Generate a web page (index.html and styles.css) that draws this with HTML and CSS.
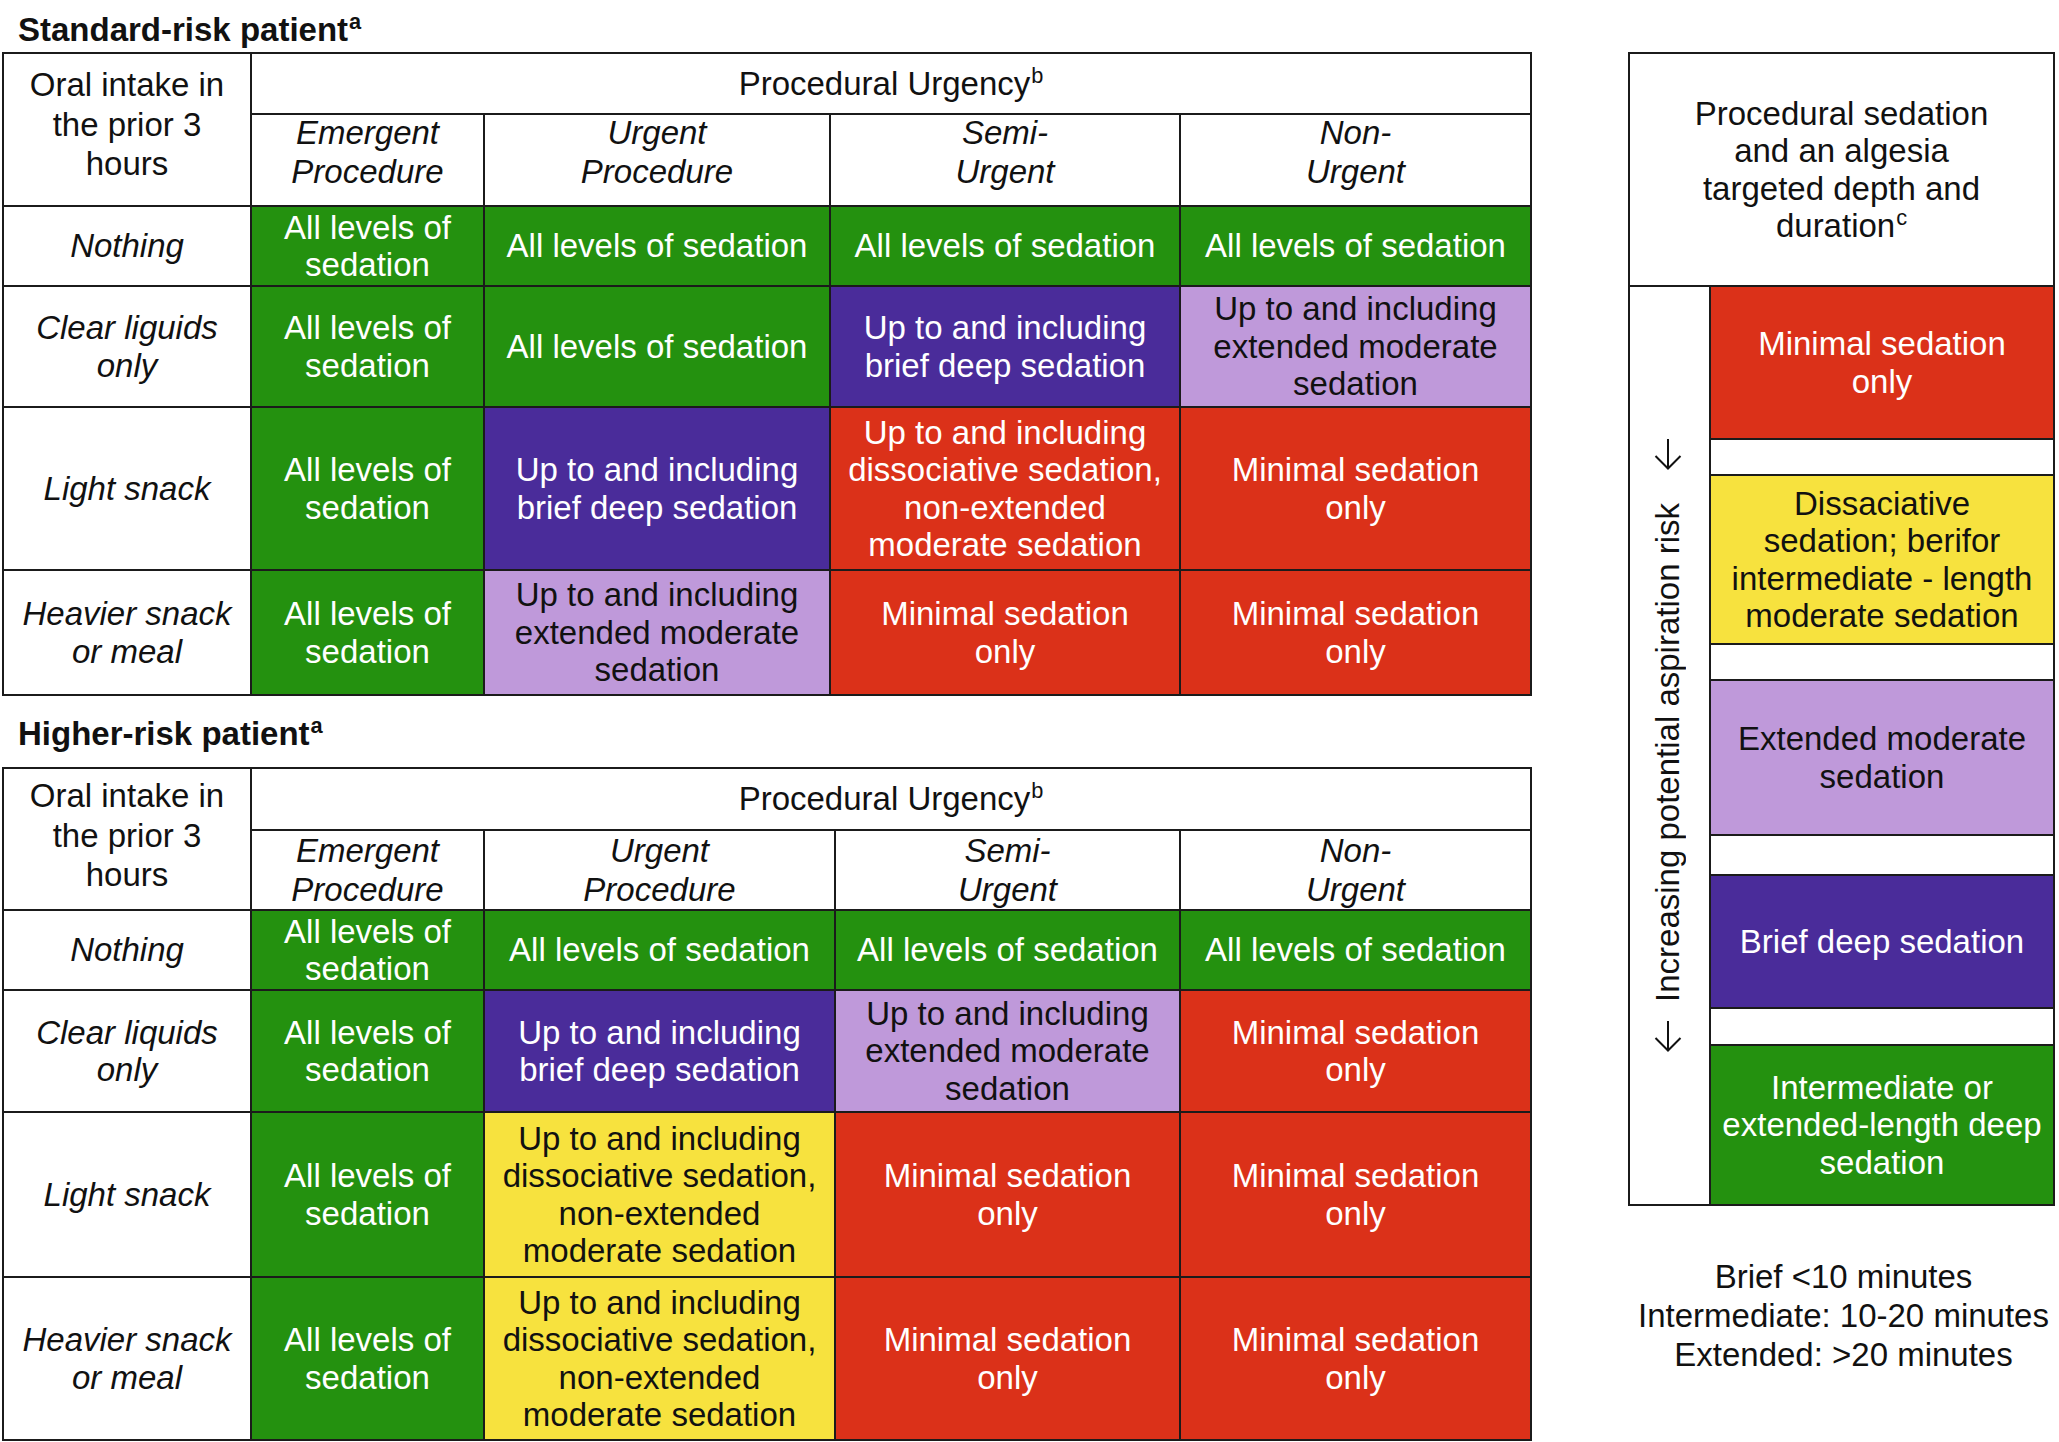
FILE: index.html
```html
<!DOCTYPE html>
<html lang="en">
<head>
<meta charset="utf-8">
<title>Procedural sedation by oral intake and urgency</title>
<link rel="stylesheet" href="styles.css">
</head>
<body>
<div class="page">
  <div class="left">
    <h2 class="title t1">Standard-risk patient<span class="sup">a</span></h2>
    <div class="grid g1">
      <div class="c hd oral">Oral intake in<br>the prior 3<br>hours</div>
      <div class="c hd urg"><span class="tx">Procedural Urgency<span class="sup">b</span></span></div>
      <div class="c hd it sub">Emergent<br>Procedure</div>
      <div class="c hd it sub">Urgent<br>Procedure</div>
      <div class="c hd it sub">Semi-<br>Urgent</div>
      <div class="c hd it sub">Non-<br>Urgent</div>

      <div class="c it">Nothing</div>
      <div class="c green">All levels of<br>sedation</div>
      <div class="c green">All levels of sedation</div>
      <div class="c green">All levels of sedation</div>
      <div class="c green">All levels of sedation</div>

      <div class="c it">Clear liguids<br>only</div>
      <div class="c green">All levels of<br>sedation</div>
      <div class="c green">All levels of sedation</div>
      <div class="c purple">Up to and including<br>brief deep sedation</div>
      <div class="c lav">Up to and including<br>extended moderate<br>sedation</div>

      <div class="c it">Light snack</div>
      <div class="c green">All levels of<br>sedation</div>
      <div class="c purple">Up to and including<br>brief deep sedation</div>
      <div class="c red">Up to and including<br>dissociative sedation,<br>non-extended<br>moderate sedation</div>
      <div class="c red">Minimal sedation<br>only</div>

      <div class="c it">Heavier snack<br>or meal</div>
      <div class="c green">All levels of<br>sedation</div>
      <div class="c lav">Up to and including<br>extended moderate<br>sedation</div>
      <div class="c red">Minimal sedation<br>only</div>
      <div class="c red">Minimal sedation<br>only</div>
    </div>

    <h2 class="title t2">Higher-risk patient<span class="sup">a</span></h2>
    <div class="grid g2">
      <div class="c hd oral">Oral intake in<br>the prior 3<br>hours</div>
      <div class="c hd urg"><span class="tx">Procedural Urgency<span class="sup">b</span></span></div>
      <div class="c hd it sub">Emergent<br>Procedure</div>
      <div class="c hd it sub">Urgent<br>Procedure</div>
      <div class="c hd it sub">Semi-<br>Urgent</div>
      <div class="c hd it sub">Non-<br>Urgent</div>

      <div class="c it">Nothing</div>
      <div class="c green">All levels of<br>sedation</div>
      <div class="c green">All levels of sedation</div>
      <div class="c green">All levels of sedation</div>
      <div class="c green">All levels of sedation</div>

      <div class="c it">Clear liquids<br>only</div>
      <div class="c green">All levels of<br>sedation</div>
      <div class="c purple">Up to and including<br>brief deep sedation</div>
      <div class="c lav">Up to and including<br>extended moderate<br>sedation</div>
      <div class="c red">Minimal sedation<br>only</div>

      <div class="c it">Light snack</div>
      <div class="c green">All levels of<br>sedation</div>
      <div class="c yellow">Up to and including<br>dissociative sedation,<br>non-extended<br>moderate sedation</div>
      <div class="c red">Minimal sedation<br>only</div>
      <div class="c red">Minimal sedation<br>only</div>

      <div class="c it">Heavier snack<br>or meal</div>
      <div class="c green">All levels of<br>sedation</div>
      <div class="c yellow">Up to and including<br>dissociative sedation,<br>non-extended<br>moderate sedation</div>
      <div class="c red">Minimal sedation<br>only</div>
      <div class="c red">Minimal sedation<br>only</div>
    </div>
  </div>

  <div class="right">
    <div class="panel">
      <div class="phead"><span class="tx">Procedural sedation<br>and an algesia<br>targeted depth and<br>duration<span class="sup">c</span></span></div>
      <div class="pbody">
        <div class="strip">
          <svg class="arr" viewBox="0 0 28 31" width="28" height="31" aria-hidden="true"><path d="M14 0 V29.5 M1.5 17 L14 29.5 L26.5 17" fill="none" stroke="#111" stroke-width="2"/></svg>
          <span class="vt">Increasing potential aspiration risk</span>
          <svg class="arr" viewBox="0 0 28 31" width="28" height="31" aria-hidden="true"><path d="M14 0 V29.5 M1.5 17 L14 29.5 L26.5 17" fill="none" stroke="#111" stroke-width="2"/></svg>
        </div>
        <div class="levels">
          <div class="lv red">Minimal sedation<br>only</div>
          <div class="lv"></div>
          <div class="lv yellow">Dissaciative<br>sedation; berifor<br>intermediate - length<br>moderate sedation</div>
          <div class="lv"></div>
          <div class="lv lav">Extended moderate<br>sedation</div>
          <div class="lv"></div>
          <div class="lv purple">Brief deep sedation</div>
          <div class="lv"></div>
          <div class="lv green">Intermediate or<br>extended-length deep<br>sedation</div>
        </div>
      </div>
    </div>
    <div class="foot">Brief &lt;10 minutes<br>Intermediate: 10-20 minutes<br>Extended: &gt;20 minutes</div>
  </div>
</div>
</body>
</html>
```

FILE: styles.css
```css
html, body {
  margin: 0;
  padding: 0;
  background: #ffffff;
}

body {
  font-family: "Liberation Sans", Arial, Helvetica, sans-serif;
  color: #111111;
}

.page {
  display: flex;
  align-items: flex-start;
  width: 2059px;
  height: 1442px;
  overflow: hidden;
}

.left {
  width: 1532px;
  padding-left: 2px;
  box-sizing: border-box;
  flex-shrink: 0;
}

.title {
  margin: 0;
  box-sizing: border-box;
  padding-left: 16px;
  font-size: 33px;
  font-weight: 700;
  line-height: 40px;
  color: #111111;
}

.t1 {
  height: 52px;
  padding-top: 10px;
}

.t2 {
  height: 71px;
  padding-top: 18px;
}

.tx {
  display: block;
}

.sup {
  font-size: 0.66em;
  vertical-align: 0.55em;
  line-height: 0;
  margin-left: 1px;
}

.grid {
  display: grid;
  width: 1530px;
  box-sizing: border-box;
  border-left: 2px solid #1b1b1b;
  border-top: 2px solid #1b1b1b;
}

.g1 {
  grid-template-columns: 248px 233px 346px 350px 351px;
  grid-template-rows: 61px 92px 80px 121px 163px 125px;
}

.g2 {
  grid-template-columns: 248px 233px 351px 345px 351px;
  grid-template-rows: 62px 80px 80px 122px 165px 163px;
}

.c {
  box-sizing: border-box;
  border-right: 2px solid #1b1b1b;
  border-bottom: 2px solid #1b1b1b;
  display: flex;
  align-items: center;
  justify-content: center;
  text-align: center;
  font-size: 33px;
  line-height: 37.4px;
  white-space: nowrap;
  background: #ffffff;
  color: #111111;
}

.hd {
  line-height: 39.5px;
}

.it {
  font-style: italic;
}

.oral {
  grid-row: span 2;
}

.g1 .oral {
  padding-bottom: 10px;
}

.g2 .oral {
  padding-bottom: 7px;
}

.urg {
  grid-column: span 4;
}

.g1 .sub {
  padding-bottom: 16px;
}

.green {
  background: #24910f;
  color: #ffffff;
}

.purple {
  background: #4a2c9a;
  color: #ffffff;
}

.lav {
  background: #bf99da;
  color: #111111;
}

.red {
  background: #db3119;
  color: #ffffff;
}

.yellow {
  background: #f7e23e;
  color: #111111;
}

.right {
  width: 431px;
  margin-left: 96px;
  flex-shrink: 0;
}

.panel {
  width: 427px;
  margin-top: 52px;
  box-sizing: border-box;
  border: 2px solid #1b1b1b;
  font-size: 33px;
}

.phead {
  height: 233px;
  box-sizing: border-box;
  border-bottom: 2px solid #1b1b1b;
  display: flex;
  align-items: center;
  justify-content: center;
  text-align: center;
  line-height: 37.5px;
  white-space: nowrap;
}

.pbody {
  display: grid;
  grid-template-columns: 81px 342px;
}

.strip {
  box-sizing: border-box;
  border-right: 2px solid #1b1b1b;
  display: flex;
  flex-direction: column;
  align-items: center;
  justify-content: center;
  overflow: hidden;
}

.arr {
  display: block;
  flex-shrink: 0;
  margin-right: 3px;
}

.vt {
  display: block;
  writing-mode: vertical-rl;
  transform: rotate(180deg);
  white-space: nowrap;
  font-size: 33px;
  line-height: 36px;
  margin: 33px 3px 19px 0;
}

.levels {
  display: grid;
  grid-template-rows: 153px 36px 169px 36px 155px 40px 133px 37px 158px;
}

.lv {
  box-sizing: border-box;
  border-bottom: 2px solid #1b1b1b;
  display: flex;
  align-items: center;
  justify-content: center;
  text-align: center;
  line-height: 37.5px;
  white-space: nowrap;
  background: #ffffff;
}

.lv:last-child {
  border-bottom: 0;
}

.levels .red,
.levels .purple,
.levels .green {
  color: #ffffff;
}

.levels .red { background: #db3119; }
.levels .yellow { background: #f7e23e; }
.levels .lav { background: #bf99da; }
.levels .purple { background: #4a2c9a; }
.levels .green { background: #24910f; }

.foot {
  margin-top: 51px;
  text-align: center;
  font-size: 33px;
  line-height: 39px;
  white-space: nowrap;
}
```
